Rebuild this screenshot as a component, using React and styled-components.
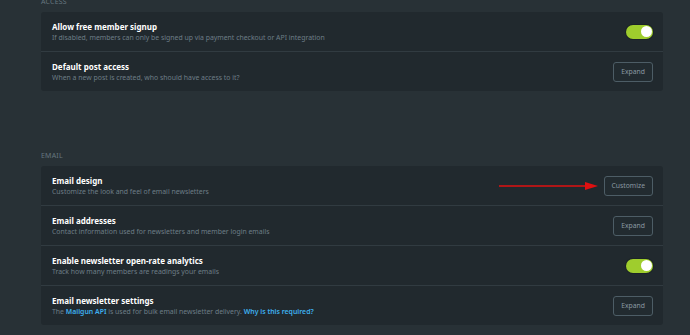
import React from 'react';
import styled, { createGlobalStyle } from 'styled-components';

const GlobalStyle = createGlobalStyle`
  html, body {
    margin: 0;
    padding: 0;
    background: #283136;
    font-family: 'Noto Sans', 'Open Sans', sans-serif;
  }
`;

const Page = styled.div`
  display: flex;
  flex-direction: column;
  gap: 60px;
  width: 622px;
  margin: -3px 0 0 41px;
`;

const Section = styled.section`
  display: flex;
  flex-direction: column;
  gap: 5px;
`;

const Label = styled.h4`
  margin: 0;
  font-size: 7px;
  line-height: 10px;
  font-weight: 400;
  letter-spacing: 0.2px;
  text-transform: uppercase;
  color: #66767f;
`;

const Card = styled.div`
  display: flex;
  flex-direction: column;
  background: #21292e;
  border-radius: 3px;
`;

const Row = styled.div`
  display: flex;
  align-items: center;
  justify-content: space-between;
  height: 39px;
  padding: 0 10px 0 11px;

  & + & {
    border-top: 1px solid ${({ $strong }) => ($strong ? '#313b41' : '#2b353b')};
  }
`;

const Info = styled.div`
  display: flex;
  flex-direction: column;
  gap: 1px;
`;

const Title = styled.span`
  font-size: 8px;
  line-height: 11px;
  font-weight: 700;
  color: #ffffff;
`;

const Desc = styled.span`
  font-size: 6.9px;
  line-height: 10px;
  color: #6d7d86;
`;

const Link = styled.span`
  color: #3eb0ef;
  font-weight: 600;
`;

const Actions = styled.div`
  display: flex;
  align-items: center;
  gap: 6px;
`;

const Button = styled.button`
  height: 20px;
  padding: 0 7px;
  background: #222b30;
  border: 1px solid #4d5d66;
  border-radius: 3px;
  font-family: inherit;
  font-size: 6.8px;
  color: #8a99a2;
`;

const Toggle = styled.div`
  display: flex;
  align-items: center;
  justify-content: flex-end;
  width: 27px;
  height: 14px;
  padding: 0 1.5px;
  box-sizing: border-box;
  background: #9fcd2d;
  border-radius: 8px;
  box-shadow: 0 0 0 1px #1b2327;
`;

const Knob = styled.span`
  width: 11px;
  height: 11px;
  border-radius: 50%;
  background: #ffffff;
`;

const sections = [
  {
    title: 'Access',
    rows: [
      {
        title: 'Allow free member signup',
        desc: 'If disabled, members can only be signed up via payment checkout or API integration',
        action: 'toggle',
      },
      {
        title: 'Default post access',
        desc: 'When a new post is created, who should have access to it?',
        action: 'Expand',
      },
    ],
  },
  {
    title: 'Email',
    rows: [
      {
        title: 'Email design',
        desc: 'Customize the look and feel of email newsletters',
        action: 'Customize',
        arrow: true,
      },
      {
        title: 'Email addresses',
        desc: 'Contact information used for newsletters and member login emails',
        action: 'Expand',
        strong: true,
      },
      {
        title: 'Enable newsletter open-rate analytics',
        desc: 'Track how many members are readings your emails',
        action: 'toggle',
      },
      {
        title: 'Email newsletter settings',
        desc: (
          <>
            The <Link>Mailgun API</Link> is used for bulk email newsletter delivery.{' '}
            <Link>Why is this required?</Link>
          </>
        ),
        action: 'Expand',
      },
    ],
  },
];

const Arrow = () => (
  <svg width="99" height="10" viewBox="0 0 99 10">
    <line x1="0" y1="5" x2="88" y2="5" stroke="#e01010" strokeWidth="1.3" />
    <polygon points="86,1 99,5 86,9" fill="#e01010" />
  </svg>
);

const App = () => (
  <>
    <GlobalStyle />
    <Page>
      {sections.map(section => (
        <Section key={section.title}>
          <Label>{section.title}</Label>
          <Card>
            {section.rows.map(row => (
              <Row key={row.title} $strong={row.strong}>
                <Info>
                  <Title>{row.title}</Title>
                  <Desc>{row.desc}</Desc>
                </Info>
                <Actions>
                  {row.arrow && <Arrow />}
                  {row.action === 'toggle' ? (
                    <Toggle>
                      <Knob />
                    </Toggle>
                  ) : (
                    <Button>{row.action}</Button>
                  )}
                </Actions>
              </Row>
            ))}
          </Card>
        </Section>
      ))}
    </Page>
  </>
);

export default App;
